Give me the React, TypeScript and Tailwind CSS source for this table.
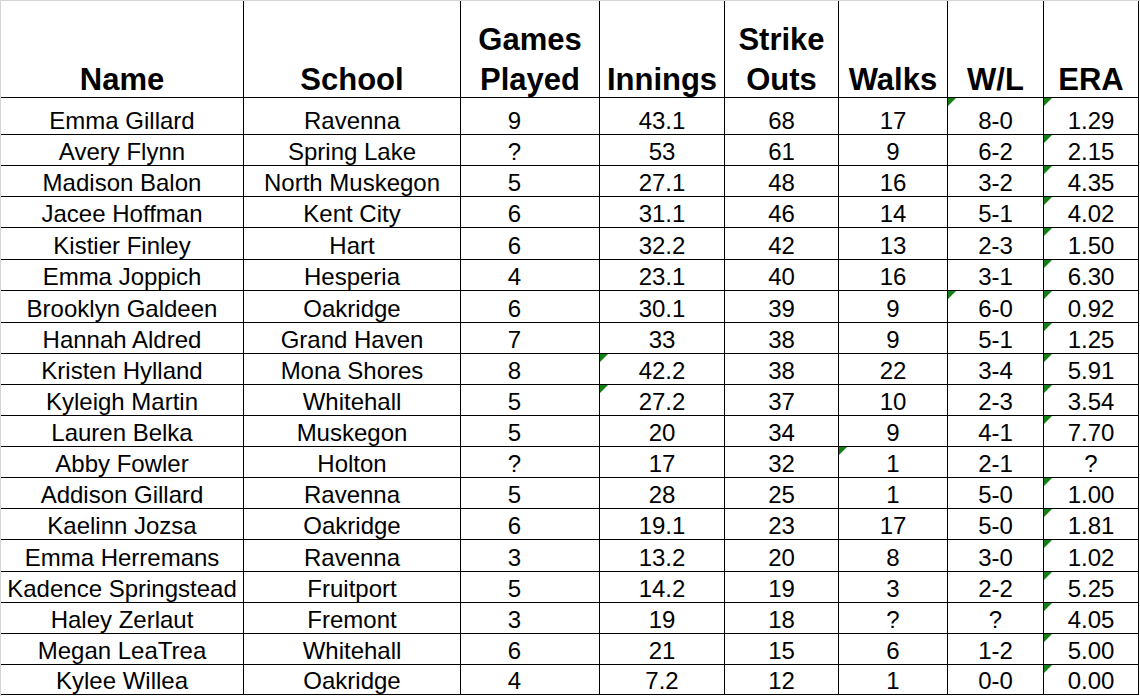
import React from "react";

type Row = [string, string, string, string, string, string, string, string];

const rows: Row[] = [
  ["Emma Gillard", "Ravenna", "9", "43.1", "68", "17", "8-0", "1.29"],
  ["Avery Flynn", "Spring Lake", "?", "53", "61", "9", "6-2", "2.15"],
  ["Madison Balon", "North Muskegon", "5", "27.1", "48", "16", "3-2", "4.35"],
  ["Jacee Hoffman", "Kent City", "6", "31.1", "46", "14", "5-1", "4.02"],
  ["Kistier Finley", "Hart", "6", "32.2", "42", "13", "2-3", "1.50"],
  ["Emma Joppich", "Hesperia", "4", "23.1", "40", "16", "3-1", "6.30"],
  ["Brooklyn Galdeen", "Oakridge", "6", "30.1", "39", "9", "6-0", "0.92"],
  ["Hannah Aldred", "Grand Haven", "7", "33", "38", "9", "5-1", "1.25"],
  ["Kristen Hylland", "Mona Shores", "8", "42.2", "38", "22", "3-4", "5.91"],
  ["Kyleigh Martin", "Whitehall", "5", "27.2", "37", "10", "2-3", "3.54"],
  ["Lauren Belka", "Muskegon", "5", "20", "34", "9", "4-1", "7.70"],
  ["Abby Fowler", "Holton", "?", "17", "32", "1", "2-1", "?"],
  ["Addison Gillard", "Ravenna", "5", "28", "25", "1", "5-0", "1.00"],
  ["Kaelinn Jozsa", "Oakridge", "6", "19.1", "23", "17", "5-0", "1.81"],
  ["Emma Herremans", "Ravenna", "3", "13.2", "20", "8", "3-0", "1.02"],
  ["Kadence Springstead", "Fruitport", "5", "14.2", "19", "3", "2-2", "5.25"],
  ["Haley Zerlaut", "Fremont", "3", "19", "18", "?", "?", "4.05"],
  ["Megan LeaTrea", "Whitehall", "6", "21", "15", "6", "1-2", "5.00"],
  ["Kylee Willea", "Oakridge", "4", "7.2", "12", "1", "0-0", "0.00"],
];

const heights = [37, 31, 31, 31, 32, 31, 32, 31, 31, 31, 31, 31, 31, 31, 32, 31, 31, 31, 30];

// [rowIndex, colIndex] cells showing the green indicator
const marks = new Set<string>([
  "8-3",
  "9-3",
  "11-5",
  "0-6",
  "6-6",
  ...rows.map((r, i) => (r[7] !== "?" ? `${i}-7` : "")).filter(Boolean),
]);

const gridCols = "grid grid-cols-[242px_217px_139px_125px_114px_109px_96px_96px]";

function cellBorder(c: number) {
  let cls = "border-b border-black";
  if (c > 0) cls += " border-l";
  if (c === 7) cls += " border-r";
  return cls;
}

function Mark() {
  return (
    <svg className="absolute left-0 top-0" width="8" height="8" viewBox="0 0 8 8">
      <polygon points="0,0 8,0 0,8" fill="#128012" />
    </svg>
  );
}

const headers: string[][] = [
  ["Name"],
  ["School"],
  ["Games", "Played"],
  ["Innings"],
  ["Strike", "Outs"],
  ["Walks"],
  ["W/L"],
  ["ERA"],
];

export default function App() {
  return (
    <div
      className="w-[1140px] h-[696px] bg-white border-t border-l border-[#d4d4d4] text-black overflow-hidden"
      style={{ fontFamily: '"Liberation Sans", Arial, sans-serif' }}
    >
      <div className={`${gridCols} h-[97px]`}>
        {headers.map((h, c) => (
          <div key={c} className={`${cellBorder(c)} flex flex-col justify-end items-center`}>
            <div className="text-[31px] font-bold leading-[40px] text-center translate-y-[3px]">
              {h.map((l, i) => (
                <div key={i}>{l}</div>
              ))}
            </div>
          </div>
        ))}
      </div>
      {rows.map((r, i) => (
        <div key={i} className={gridCols} style={{ height: heights[i] }}>
          {r.map((v, c) => (
            <div
              key={c}
              className={`${cellBorder(c)} relative flex items-end justify-center text-[24px] leading-[26px] ${
                c === 2 ? "pr-[31px]" : ""
              }`}
            >
              {marks.has(`${i}-${c}`) && <Mark />}
              <span>{v}</span>
            </div>
          ))}
        </div>
      ))}
    </div>
  );
}
